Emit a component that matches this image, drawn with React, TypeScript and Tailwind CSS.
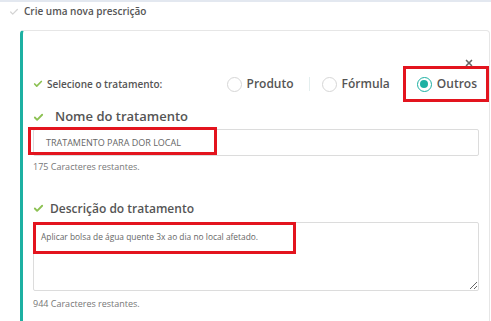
import { Check, X } from 'lucide-react';

function Radio({ label, checked }: { label: string; checked?: boolean }) {
    return (
        <label className="flex items-center gap-[5px] text-[12px] font-semibold text-[#555]">
            <span
                className={
                    checked
                        ? 'flex h-[15px] w-[15px] items-center justify-center rounded-full border border-[#1db0a2]'
                        : 'flex h-[15px] w-[15px] items-center justify-center rounded-full border border-[#d6d6d6]'
                }
            >
                {checked && <span className="h-[8px] w-[8px] rounded-full bg-[#1db0a2]" />}
            </span>
            {label}
        </label>
    );
}

export default function App() {
    return (
        <div className="relative h-[321px] w-[491px] overflow-hidden border-t-2 border-[#e3e8f0] bg-white font-['Open_Sans',sans-serif] text-[#555]">
            {/* Section header */}
            <div className="flex h-[19px] items-center gap-[5px] pl-[9px]">
                <Check className="h-[10px] w-[10px] text-[#d4d4d4]" strokeWidth={3} />
                <span className="text-[10px] font-semibold text-[#555]">Crie uma nova prescrição</span>
            </div>

            {/* Card */}
            <div className="relative ml-[20px] mr-[1px] mt-[9px] h-[300px] rounded-t-[4px] border border-l-[3px] border-[#e6e6e6] border-l-[#1db0a2] pl-[10px] pr-[10px] pt-[35px]">
                <X className="absolute right-[15px] top-[27px] h-[10px] w-[10px] text-[#666]" strokeWidth={4} />

                <div className="flex h-[36px] items-center">
                    <div className="flex items-center gap-[4px]">
                        <Check className="h-[10px] w-[10px] text-[#8cc152]" strokeWidth={4} />
                        <span className="text-[10px] font-semibold">Selecione o tratamento:</span>
                    </div>
                    <div className="ml-auto mr-[-10px] flex items-center">
                        <Radio label="Produto" />
                        <span className="ml-[15px] mr-[12px] h-[14px] w-px bg-[#e3eeee]" />
                        <Radio label="Fórmula" />
                        <div className="ml-[13px] flex h-[36px] items-center border-[3px] border-[#e3141e] pl-[11px] pr-[9px]">
                            <Radio label="Outros" checked />
                        </div>
                    </div>
                </div>

                <div className="mt-[5px] flex h-[20px] items-center gap-[11px]">
                    <Check className="h-[11px] w-[11px] text-[#8cc152]" strokeWidth={4} />
                    <span className="text-[13px] font-semibold">Nome do tratamento</span>
                </div>
                <div className="relative mt-[2px] flex h-[27px] items-center rounded-[2px] border border-[#dcdcdc] pl-[12px] text-[9px] text-[#666]">
                    TRATAMENTO PARA DOR LOCAL
                    <span className="absolute left-[-6px] top-[-3px] h-[28px] w-[189px] border-[3px] border-[#e3141e]" />
                </div>
                <p className="mt-[4px] text-[9px] text-[#777]">175 Caracteres restantes.</p>

                <div className="mt-[25px] flex h-[20px] items-center gap-[6px]">
                    <Check className="h-[11px] w-[11px] text-[#8cc152]" strokeWidth={4} />
                    <span className="text-[12px] font-semibold">Descrição do tratamento</span>
                </div>
                <div className="relative mt-[3px]">
                    <textarea
                        readOnly
                        value="Aplicar bolsa de água quente 3x ao dia no local afetado."
                        className="block h-[69px] w-full rounded-[2px] border border-[#dcdcdc] px-[7px] py-[8px] text-[8.4px] text-[#666] outline-none"
                    />
                    <span className="pointer-events-none absolute left-0 top-0 h-[32px] w-[263px] border-[3px] border-[#e3141e]" />
                </div>
                <p className="mt-[6px] text-[9px] text-[#777]">944 Caracteres restantes.</p>
            </div>
        </div>
    );
}
